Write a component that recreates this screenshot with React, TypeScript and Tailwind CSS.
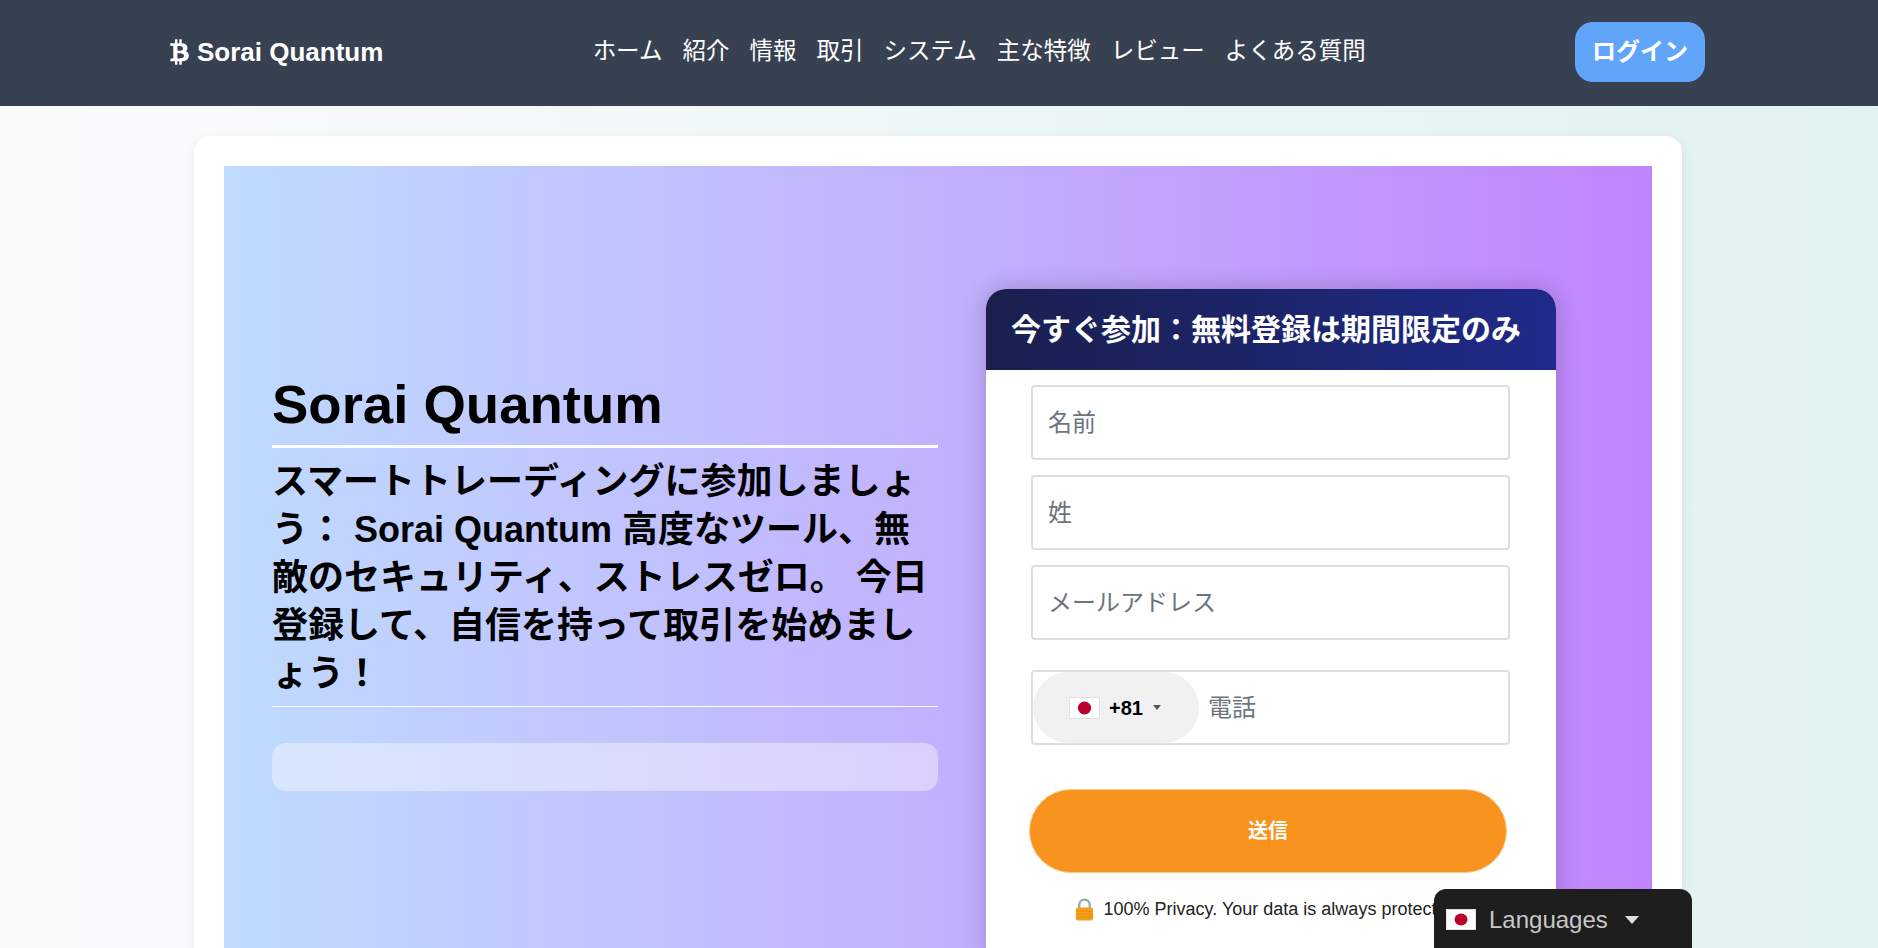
import { FaBtc } from "react-icons/fa";

const FONT = "font-['Liberation_Sans','Noto_Sans_CJK_JP',sans-serif]";

function Flag({ className }: { className: string }) {
  return (
    <svg viewBox="0 0 30 22" className={className} preserveAspectRatio="none">
      <rect x="0.5" y="0.5" width="29" height="21" fill="#fff" stroke="#e2e2e2" />
      <ellipse cx="15" cy="11" rx="6.4" ry="6.4" fill="#bc002d" />
    </svg>
  );
}

function Lock() {
  return (
    <svg viewBox="0 0 20 24" className="w-[19px] h-[23px] shrink-0">
      <path d="M4.5 11V7a5.5 5.5 0 0 1 11 0v4" fill="none" stroke="#9aa5ac" strokeWidth="2.4" />
      <rect x="1" y="10" width="18" height="13.5" rx="2" fill="#f59e1b" />
      <path d="M1 14h18M1 17h18M1 20h18" stroke="#e68a0c" strokeWidth="0.8" />
    </svg>
  );
}

function Field({ label }: { label: string }) {
  return (
    <div className="h-[75px] w-[479px] border-2 border-[#dedede] rounded-[4px] bg-white flex items-center pl-[15px] text-[24px] text-[#6c757d]">
      {label}
    </div>
  );
}

const NAV = ["ホーム", "紹介", "情報", "取引", "システム", "主な特徴", "レビュー", "よくある質問"];

export default function App() {
  return (
    <div className={`${FONT} h-screen overflow-hidden flex flex-col bg-gradient-to-r from-[#fbfbfc] to-[#e0f2f1]`}>
      <header className="h-[106px] shrink-0 bg-[#374151] flex items-center justify-between pl-[170px] pr-[173px] pb-[2px]">
        <div className="flex items-center gap-[8px] text-white font-bold text-[26px] leading-none">
          <FaBtc className="w-[19px] h-[26px]" />
          <span>Sorai Quantum</span>
        </div>
        <nav className="flex items-center gap-[20px] text-white text-[23.5px] leading-none">
          {NAV.map((n) => (
            <span key={n}>{n}</span>
          ))}
        </nav>
        <div className="w-[130px] h-[60px] rounded-[18px] bg-[#60a5fa] text-white font-bold text-[24px] flex items-center justify-center">
          ログイン
        </div>
      </header>

      <main className="flex-1 min-h-0 pt-[30px] pl-[194px]">
        <div className="w-[1488px] bg-white rounded-[16px] p-[30px] shadow-[0_4px_12px_rgba(0,0,0,0.08)] h-[1000px]">
          <div className="h-full bg-gradient-to-r from-[#bfdbfe] to-[#c084fc] flex pl-[48px] pt-[123px]">
            <section className="w-[666px] shrink-0 pt-[84px] text-black">
              <h1 className="font-bold text-[54.5px] leading-[64px] pb-[8px] border-b-[3px] border-white">Sorai Quantum</h1>
              <p className="font-bold text-[36px] leading-[48px] pt-[10px] pb-[8px] border-b border-white">
                スマートトレーディングに参加しましょう： Sorai Quantum 高度なツール、無敵のセキュリティ、ストレスゼロ。 今日登録して、自信を持って取引を始めましょう！
              </p>
              <div className="mt-[36px] h-[48px] rounded-[14px] bg-white/40" />
            </section>

            <section className="ml-[48px] w-[570px] shrink-0 self-start bg-white rounded-t-[20px] shadow-[0_0_24px_rgba(0,0,0,0.2)]">
              <div className="h-[81px] rounded-t-[20px] bg-gradient-to-r from-[#1a1f4e] to-[#1f2a8a] flex items-center pl-[25px] text-white font-bold text-[30px] leading-none whitespace-nowrap">
                今すぐ参加：無料登録は期間限定のみ
              </div>
              <div className="pl-[45px] pt-[15px] flex flex-col pb-[40px]">
                <div className="flex flex-col gap-[15px]">
                  <Field label="名前" />
                  <Field label="姓" />
                  <Field label="メールアドレス" />
                </div>
                <div className="mt-[30px] h-[75px] w-[479px] border-2 border-[#dedede] rounded-[4px] flex items-center text-[24px] text-[#6c757d]">
                  <div className="h-[71px] w-[166px] rounded-[52px] bg-[#f1f1f1] flex items-center pl-[36px] shrink-0">
                    <Flag className="w-[31px] h-[22px]" />
                    <span className="ml-[9px] font-bold text-[20px] text-black">+81</span>
                    <span className="ml-[10px] w-0 h-0 border-x-[4px] border-x-transparent border-t-[5px] border-t-[#555]" />
                  </div>
                  <span className="ml-[9px]">電話</span>
                </div>
                <div className="mt-[44px] -ml-[2px] w-[478px] h-[84px] rounded-[42px] bg-[#f7931e] border border-[#fbc98a] text-white font-bold text-[20px] flex items-center justify-center">
                  送信
                </div>
                <div className="mt-[23px] -ml-[2px] w-[478px] flex items-center justify-center gap-[10px] text-[18px] text-[#222] whitespace-nowrap">
                  <Lock />
                  <span>100% Privacy. Your data is always protected.</span>
                </div>
              </div>
            </section>
          </div>
        </div>
      </main>

      <div className="fixed bottom-0 right-[186px] w-[258px] h-[59px] bg-[#1e1e1e] rounded-t-[12px] flex items-start pt-[20px] pl-[12px] text-[24px] leading-[22px] text-[#c8c8c8]">
        <Flag className="w-[30px] h-[21px]" />
        <span className="ml-[13px]">Languages</span>
        <span className="ml-[17px] mt-[7px] w-0 h-0 border-x-[7px] border-x-transparent border-t-[8px] border-t-[#e0e0e0]" />
      </div>
    </div>
  );
}
